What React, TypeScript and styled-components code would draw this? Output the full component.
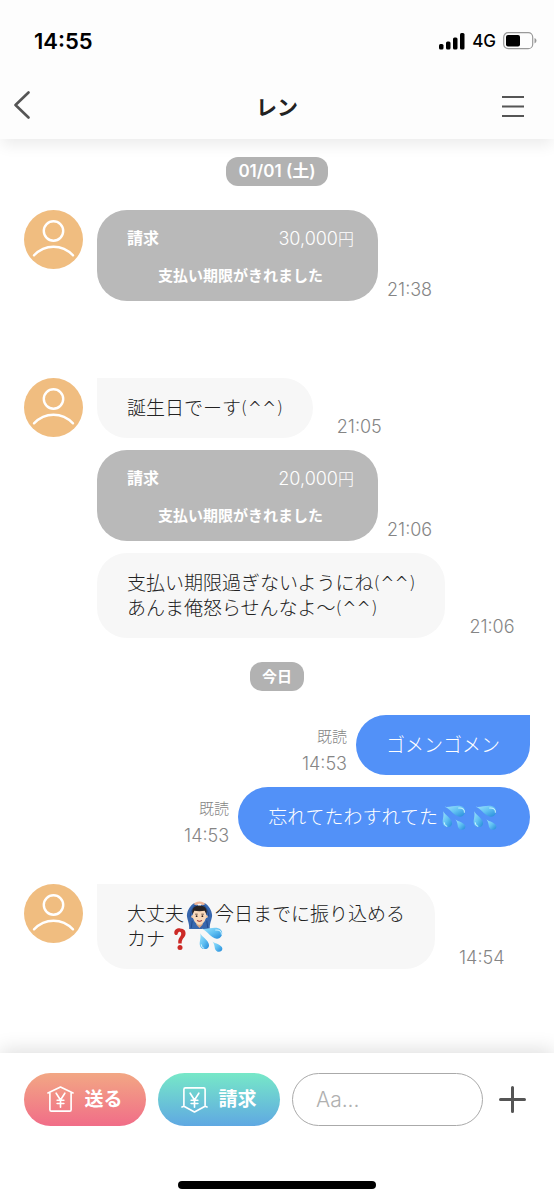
import React from "react";
import styled, { createGlobalStyle, css } from "styled-components";

const GlobalStyle = createGlobalStyle`
  *, *::before, *::after { box-sizing: border-box; }
  body {
    margin: 0;
    background: #fff;
    color: #222;
    font-family: Inter, "Noto Sans CJK JP", sans-serif;
    font-size: 19px;
    line-height: 25px;
  }
  button, input { font: inherit; }
  svg { display: block; flex: none; }
`;

const Screen = styled.div`
  display: flex;
  flex-direction: column;
  min-height: 100vh;
`;

const Header = styled.header`
  background: #fdfdfd;
  box-shadow: 0 8px 14px -2px rgba(0, 0, 0, 0.08);
`;

const StatusBar = styled.div`
  display: flex;
  align-items: center;
  justify-content: space-between;
  height: 82px;
  padding: 0 17px 0 34px;
  color: #000;
`;

const Clock = styled.time`
  font-size: 22px;
  font-weight: 600;
`;

const StatusIcons = styled.div`
  display: flex;
  align-items: center;
  gap: 7px;
  font-size: 17px;
  font-weight: 500;
`;

const NavBar = styled.nav`
  display: grid;
  grid-template-columns: 60px 1fr 60px;
  align-items: center;
  height: 57px;
  padding: 0 12px 9px;
`;

const IconButton = styled.button<{ $end?: boolean }>`
  display: flex;
  flex: none;
  align-items: center;
  justify-content: ${(p) => (p.$end ? "flex-end" : "flex-start")};
  padding: 0;
  border: 0;
  background: none;
  color: #555;
  cursor: pointer;
`;

const MenuButton = styled(IconButton)`
  padding-right: 18px;
`;

const Title = styled.h1`
  margin: 0;
  padding-top: 2px;
  font-size: 21px;
  font-weight: 700;
  text-align: center;
`;

const Thread = styled.main`
  display: flex;
  flex: 1;
  flex-direction: column;
  padding: 18px 24px 60px;
`;

const DatePill = styled.div<{ $small?: boolean }>`
  align-self: center;
  padding: 2px 12px;
  border-radius: 12px;
  background: #b2b2b2;
  color: #fff;
  font-size: ${(p) => (p.$small ? 15 : 17)}px;
  font-weight: 600;
`;

const Group = styled.section<{ $space: number }>`
  display: flex;
  align-items: flex-start;
  gap: 14px;
  margin-top: ${(p) => p.$space}px;
`;

const Stack = styled.div<{ $mine?: boolean }>`
  display: flex;
  flex: 1;
  flex-direction: column;
  align-items: ${(p) => (p.$mine ? "flex-end" : "flex-start")};
  gap: 12px;
  min-width: 0;
`;

const Row = styled.div<{ $gap: number }>`
  display: flex;
  align-items: flex-end;
  gap: ${(p) => p.$gap}px;
`;

const Bubble = styled.div<{ $mine?: boolean; $first?: boolean }>`
  padding: 18px 30px 17px;
  border-radius: 30px;
  background: #f7f7f7;
  font-weight: 300;
  ${(p) => p.$first && !p.$mine && css`border-top-left-radius: 0;`}
  ${(p) => p.$first && p.$mine && css`border-top-right-radius: 0;`}
  ${(p) => p.$mine && css`background: #5291f8; color: #fff;`}
`;

const Line = styled.div`
  display: flex;
  align-items: center;
  height: 25px;
  white-space: nowrap;
`;

const Kaomoji = styled.span`
  font-family: "DejaVu Sans", sans-serif;
  font-size: 17px;
`;

const Request = styled.div`
  display: flex;
  flex-direction: column;
  gap: 12px;
  width: 281px;
  padding: 16px 24px 13px 30px;
  border-radius: 30px;
  background: #b9b9b9;
  color: #fff;
  font-size: 16px;
`;

const RequestTop = styled.div`
  display: flex;
  align-items: center;
  justify-content: space-between;
  height: 25px;
`;

const Amount = styled.span`
  font-weight: 300;
`;

const Figure = styled.span`
  font-size: 18px;
`;

const Expired = styled.strong`
  font-size: 15px;
  font-weight: 600;
  text-align: center;
`;

const Meta = styled.div`
  display: flex;
  flex-direction: column;
  align-items: flex-end;
  gap: 5px;
  color: #858585;
  font-size: 18px;
  font-weight: 300;
  line-height: 22px;
`;

const ReadMark = styled.span`
  font-size: 15px;
`;

const Footer = styled.footer`
  display: flex;
  flex-direction: column;
  align-items: center;
  justify-content: space-between;
  min-height: 147px;
  padding: 20px 24px 11px;
  background: #fff;
  box-shadow: 0 -4px 18px rgba(0, 0, 0, 0.12);
`;

const Composer = styled.form`
  display: flex;
  align-items: center;
  gap: 12px;
  width: 100%;
`;

const Action = styled.button<{ $from: string; $to: string }>`
  display: flex;
  flex: none;
  align-items: center;
  justify-content: center;
  gap: 10px;
  width: 122px;
  height: 53px;
  padding: 0;
  border: 0;
  border-radius: 27px;
  background: linear-gradient(${(p) => p.$from}, ${(p) => p.$to});
  color: #fff;
  font-size: 19px;
  font-weight: 600;
  cursor: pointer;
`;

const Field = styled.input`
  flex: 1;
  min-width: 0;
  height: 53px;
  padding: 0 23px;
  border: 1px solid #aaa;
  border-radius: 27px;
  background: #fff;
  color: #222;
  font-size: 21px;
  font-weight: 300;
  &::placeholder { color: #b0b0b0; opacity: 1; }
`;

const AddButton = styled(IconButton)`
  padding: 0 4px;
`;

const HomeIndicator = styled.div`
  width: 198px;
  height: 8px;
  border-radius: 4px;
  background: #000;
`;

const Avatar = () => (
  <svg width="59" height="59" viewBox="0 0 59 59" role="img" aria-label="レン">
    <circle cx="29.5" cy="29.5" r="29.5" fill="#f0bd80" />
    <g fill="none" stroke="#fff" strokeWidth="2.4" strokeLinecap="round">
      <circle cx="29.5" cy="21" r="9.7" />
      <path d="M10 45.3C21 33.8 38 33.8 49 45.3" />
    </g>
  </svg>
);

const Sweat = () => (
  <svg width="31" height="27" viewBox="0 0 30 25" role="img" aria-label="💦">
    <defs>
      <linearGradient id="drop" x1="0" y1="0" x2="1" y2="1">
        <stop offset="0" stopColor="#9fe3fb" />
        <stop offset=".5" stopColor="#62c2f3" />
        <stop offset="1" stopColor="#2388d8" />
      </linearGradient>
    </defs>
    <g fill="url(#drop)">
      <path d="M5 6.5C6.500 10 13.500 13.500 13.600 18C13.600 23 5.200 23.300 4.600 17.500C4.300 14 6 11 5 6.500Z" />
      <path d="M6.500 2.200C12 2.800 17 .3 22.500 1.500C28 2.900 27.500 11 21.500 11.700C15.500 12 12.500 4.400 6.500 2.200Z" />
      <path d="M17 14.500C19 16.500 26.500 17.500 26.500 21.500C26.300 25.300 20.500 25.600 19.300 21.500C18.800 19 18.700 16.500 17 14.500Z" />
    </g>
    <path d="M20 3.400C24 3 26 5 25.500 7.500M6 17.500C6.200 19.500 7 20.500 8.500 21" fill="none" stroke="#c9f1ff" strokeWidth="1" strokeLinecap="round" />
  </svg>
);

const OkMan = () => (
  <svg width="31" height="28" viewBox="0 0 30 27" role="img" aria-label="🙆🏻‍♂️">
    <path d="M5 27C5.500 22 3 18 2.800 14C3 9 6.500 4 10 2L14 4C10.500 7 8 11 8.500 16L12 21H18L21.500 16C22 11 19.500 7 16 4L20 2C23.500 4 27 9 27.200 14C27 18 24.500 22 25 27Z" fill="#3867ae" />
    <path d="M8 27L9 19H21L22 27Z" fill="#3867ae" />
    <path d="M6 15C6.500 10 8 7 11 4M24 15C23.500 10 22 7 19 4M7 26L8 19M23 26L22 19" fill="none" stroke="#244c8e" strokeWidth="1" />
    <path d="M9.500 3C11-.5 19-.5 20.500 3L18 4C16.500 2 13.500 2 12 4Z" fill="#efb596" />
    <path d="M12 20H18V23L15 26L12 23Z" fill="#dca984" />
    <circle cx="8.500" cy="15" r="1.500" fill="#efc6a2" />
    <circle cx="21.500" cy="15" r="1.500" fill="#efc6a2" />
    <path d="M8.800 11C9 6 21 6 21.200 11V15C21 20 17.500 23 15 23S9 20 8.800 15Z" fill="#f8d9bb" />
    <path d="M8.300 13C7 7 10 4.200 15 4.200S23 7 21.700 13L20 9.500C17 10 13 10 10 9.500Z" fill="#292322" />
    <path d="M10.800 12.700H13.200M16.800 12.700H19.200" stroke="#50382c" strokeWidth=".8" />
    <circle cx="12.200" cy="14.600" r=".9" fill="#32231f" />
    <circle cx="17.800" cy="14.600" r=".9" fill="#32231f" />
    <path d="M13 18.800C14.500 20 15.500 20 17 18.800" fill="none" stroke="#b5544b" strokeWidth="1.100" strokeLinecap="round" />
  </svg>
);

const Question = () => (
  <svg width="30" height="25" viewBox="0 0 30 25" role="img" aria-label="❓">
    <path d="M9.300 6.200C9 2.800 12 1 15.200 1.400C19.500 1.700 21 4 20.500 7.300C20 11 16.500 11.500 16.700 16.500L13.300 16.500C12.700 10.500 16 10 16.200 7C16.300 4.700 14.700 4.300 13.500 5.200C12.500 6.200 13 8 11.300 8C10.200 8 9.500 7.300 9.300 6.200Z" fill="#cc2a26" />
    <circle cx="15" cy="20.500" r="2.500" fill="#cc2a26" />
  </svg>
);

const YenIcon = ({ down }: { down?: boolean }) => (
  <svg width="27" height="27" viewBox="0 0 28 28" fill="none" stroke="#fff" strokeWidth="1.700" strokeLinecap="round" strokeLinejoin="round" aria-hidden="true">
    {down ? (
      <path d="M3 20V3.500Q3 2 4.500 2H23.500Q25 2 25 3.500V20M1 21.800L3 21L14 27L25 21L27 21.800" />
    ) : (
      <path d="M3 7.500V24.500Q3 26 4.500 26H23.500Q25 26 25 24.500V7.500M1 7.200L14 1L27 7.200" />
    )}
    <path d="M9.500 7.500L14 14.500L18.500 7.500M14 14.500V22M10.500 14.800H17.500M10.500 18.200H17.500" />
  </svg>
);

const RequestCard = ({ amount, time }: { amount: string; time: string }) => (
  <Row $gap={9}>
    <Request>
      <RequestTop>
        <strong>請求</strong>
        <Amount><Figure>{amount}</Figure>円</Amount>
      </RequestTop>
      <Expired>支払い期限がきれました</Expired>
    </Request>
    <Meta><time>{time}</time></Meta>
  </Row>
);

const Received = ({ lines, time, first }: { lines: React.ReactNode[]; time: string; first?: boolean }) => (
  <Row $gap={24}>
    <Bubble $first={first}>
      {lines.map((line, i) => <Line key={i}>{line}</Line>)}
    </Bubble>
    <Meta><time>{time}</time></Meta>
  </Row>
);

const Sent = ({ children, time, first }: { children: React.ReactNode; time: string; first?: boolean }) => (
  <Row $gap={9}>
    <Meta>
      <ReadMark>既読</ReadMark>
      <time>{time}</time>
    </Meta>
    <Bubble $mine $first={first}><Line>{children}</Line></Bubble>
  </Row>
);

export default function App() {
  return (
    <Screen lang="ja">
      <GlobalStyle />
      <Header>
        <StatusBar>
          <Clock>14:55</Clock>
          <StatusIcons>
            <svg width="26" height="17" viewBox="0 0 26 17" aria-hidden="true">
              <rect x="0" y="11" width="4.500" height="5.500" rx="1.500" />
              <rect x="7" y="8.500" width="4.500" height="8" rx="1.500" />
              <rect x="14" y="4.500" width="4.500" height="12" rx="1.500" />
              <rect x="21" y="0" width="4.500" height="16.500" rx="1.500" />
            </svg>
            <span>4G</span>
            <svg width="34" height="18" viewBox="0 0 34 18" aria-hidden="true">
              <rect x=".7" y=".7" width="29" height="16" rx="4.500" fill="none" stroke="#999" strokeWidth="1.200" />
              <rect x="3" y="3" width="14" height="11.500" rx="2" />
              <path d="M31.500 6V11.500Q33.500 10.500 33.500 8.700T31.500 6Z" fill="#999" />
            </svg>
          </StatusIcons>
        </StatusBar>
        <NavBar>
          <IconButton type="button" aria-label="戻る">
            <svg width="20" height="30" viewBox="0 0 20 30" fill="none" stroke="currentColor" strokeWidth="2.600" strokeLinecap="round" strokeLinejoin="round">
              <path d="M16.500 1.500L3.500 14L16.500 26.500" />
            </svg>
          </IconButton>
          <Title>レン</Title>
          <MenuButton type="button" aria-label="メニュー" $end>
            <svg width="22" height="22" viewBox="0 0 22 22" stroke="currentColor" strokeWidth="2">
              <path d="M0 2H22M0 11.500H22M0 21H22" />
            </svg>
          </MenuButton>
        </NavBar>
      </Header>

      <Thread>
        <DatePill>01/01 (土)</DatePill>
        <Group $space={24}>
          <Avatar />
          <Stack>
            <RequestCard amount="30,000" time="21:38" />
          </Stack>
        </Group>
        <Group $space={77}>
          <Avatar />
          <Stack>
            <Received first lines={[<>誕生日でーす<Kaomoji>(^^)</Kaomoji></>]} time="21:05" />
            <RequestCard amount="20,000" time="21:06" />
            <Received
              lines={[
                <>支払い期限過ぎないようにね<Kaomoji>(^^)</Kaomoji></>,
                <>あんま俺怒らせんなよ〜<Kaomoji>(^^)</Kaomoji></>,
              ]}
              time="21:06"
            />
          </Stack>
        </Group>
        <Group $space={24} as="div">
          <Stack>
            <DatePill $small>今日</DatePill>
          </Stack>
        </Group>
        <Group $space={24}>
          <Stack $mine>
            <Sent first time="14:53">ゴメンゴメン</Sent>
            <Sent time="14:53">忘れてたわすれてた<Sweat /><Sweat /></Sent>
          </Stack>
        </Group>
        <Group $space={37}>
          <Avatar />
          <Stack>
            <Received
              first
              lines={[<>大丈夫<OkMan />今日までに振り込める</>, <>カナ<Question /><Sweat /></>]}
              time="14:54"
            />
          </Stack>
        </Group>
      </Thread>

      <Footer>
        <Composer onSubmit={(e) => e.preventDefault()}>
          <Action type="button" $from="#f2a784" $to="#f16d88"><YenIcon />送る</Action>
          <Action type="button" $from="#77e8c8" $to="#5fa8e2"><YenIcon down />請求</Action>
          <Field type="text" placeholder="Aa..." aria-label="メッセージ" />
          <AddButton type="button" aria-label="追加">
            <svg width="27" height="27" viewBox="0 0 27 27" stroke="currentColor" strokeWidth="3" strokeLinecap="round">
              <path d="M1.500 13.500H25.500M13.500 1.500V25.500" />
            </svg>
          </AddButton>
        </Composer>
        <HomeIndicator />
      </Footer>
    </Screen>
  );
}
